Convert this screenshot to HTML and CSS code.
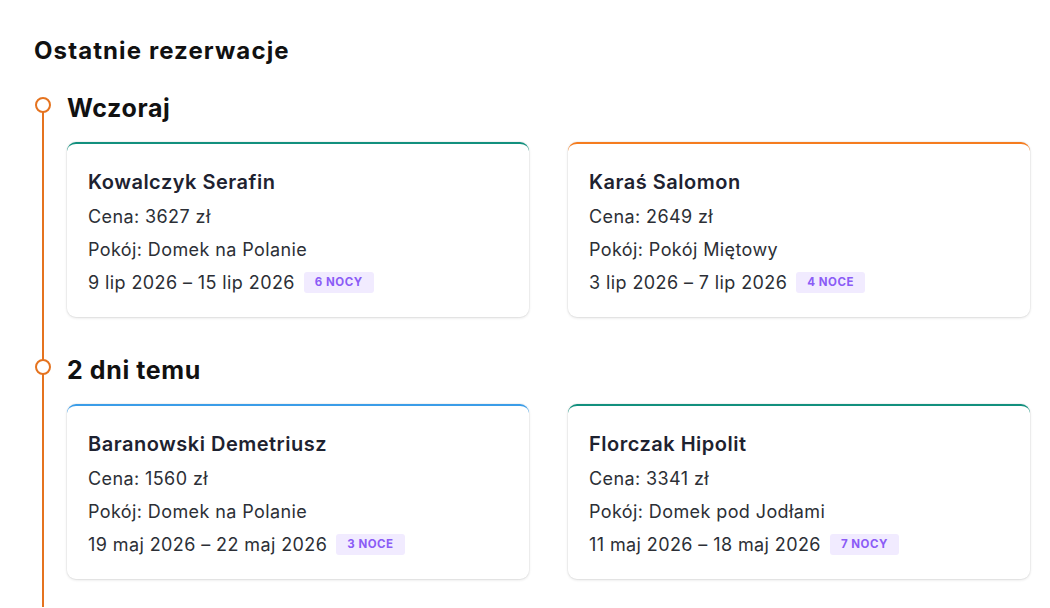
FILE: index.html
```html
<!DOCTYPE html>
<html lang="pl">
<head>
<meta charset="utf-8">
<title>Ostatnie rezerwacje</title>
<link rel="stylesheet" href="styles.css">
</head>
<body>
<main class="page">
  <h1 class="title">Ostatnie rezerwacje</h1>
  <div class="timeline">
    <section class="group">
      <h2 class="group-title"><span class="dot"></span>Wczoraj</h2>
      <div class="cards">
        <article class="card teal">
          <h3 class="name">Kowalczyk Serafin</h3>
          <p class="line">Cena: 3627 zł</p>
          <p class="line">Pokój: Domek na Polanie</p>
          <p class="line">9 lip 2026 – 15 lip 2026 <span class="badge">6 nocy</span></p>
        </article>
        <article class="card orange">
          <h3 class="name">Karaś Salomon</h3>
          <p class="line">Cena: 2649 zł</p>
          <p class="line">Pokój: Pokój Miętowy</p>
          <p class="line">3 lip 2026 – 7 lip 2026 <span class="badge">4 noce</span></p>
        </article>
      </div>
    </section>
    <section class="group">
      <h2 class="group-title"><span class="dot"></span>2 dni temu</h2>
      <div class="cards">
        <article class="card blue">
          <h3 class="name">Baranowski Demetriusz</h3>
          <p class="line">Cena: 1560 zł</p>
          <p class="line">Pokój: Domek na Polanie</p>
          <p class="line">19 maj 2026 – 22 maj 2026 <span class="badge">3 noce</span></p>
        </article>
        <article class="card teal">
          <h3 class="name">Florczak Hipolit</h3>
          <p class="line">Cena: 3341 zł</p>
          <p class="line">Pokój: Domek pod Jodłami</p>
          <p class="line">11 maj 2026 – 18 maj 2026 <span class="badge">7 nocy</span></p>
        </article>
      </div>
    </section>
  </div>
</main>
</body>
</html>
```
FILE: styles.css
```css
* { box-sizing: border-box; }
html, body { margin: 0; padding: 0; background: #fff; }
body {
  font-family: Inter, "Noto Sans", "Liberation Sans", sans-serif;
  color: #23252b;
}
.page {
  height: 608px;
  overflow: hidden;
  padding: 35px 20px 0 34px;
}
.title {
  margin: 0;
  font-size: 24px;
  line-height: 32px;
  font-weight: 700;
  color: #111;
  letter-spacing: 1.1px;
}
.timeline {
  position: relative;
  margin-top: 25px;
  padding-left: 33px;
  padding-bottom: 28px;
}
.timeline::before {
  content: "";
  position: absolute;
  left: 8px;
  top: 20px;
  bottom: 0;
  width: 2px;
  background: #e5731f;
}
.group + .group { margin-top: 37px; }
.group-title {
  position: relative;
  margin: 0 0 18px;
  font-size: 25px;
  line-height: 32px;
  font-weight: 700;
  color: #111;
  letter-spacing: 0.6px;
}
.dot {
  position: absolute;
  left: -32px;
  top: 5px;
  width: 16px;
  height: 16px;
  border: 2px solid #e5731f;
  border-radius: 50%;
  background: #fff;
}
.cards {
  display: grid;
  grid-template-columns: 462px 462px;
  column-gap: 39px;
}
.card {
  border-radius: 9px;
  border-top: 2px solid #12907e;
  background: #fff;
  box-shadow: 0 1px 3px rgba(0,0,0,0.12), 0 0 0 1px rgba(0,0,0,0.03);
  padding: 22px 20px 18px 21px;
  height: 175px;
}
.card.teal { border-top-color: #12907e; }
.card.orange { border-top-color: #f57c1f; }
.card.blue { border-top-color: #3b9de8; }
.name {
  margin: 0 0 2px;
  font-size: 20px;
  line-height: 32px;
  font-weight: 600;
  color: #1e2230;
  letter-spacing: 0.5px;
}
.line {
  margin: 0;
  font-size: 18px;
  line-height: 33px;
  color: #2c2f36;
  letter-spacing: 0.4px;
  display: flex;
  align-items: center;
}
.badge {
  display: inline-block;
  margin-left: 9px;
  height: 21px;
  line-height: 21px;
  padding: 0 11px;
  border-radius: 3px;
  background: #f1ebff;
  color: #8b5cf6;
  font-size: 11.5px;
  font-weight: 700;
  text-transform: uppercase;
  letter-spacing: 0.5px;
}
```
